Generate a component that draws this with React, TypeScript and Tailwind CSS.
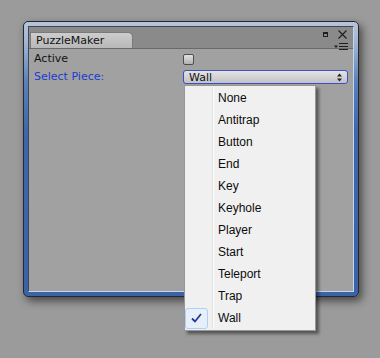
const PIECES = ['None', 'Antitrap', 'Button', 'End', 'Key', 'Keyhole', 'Player', 'Start', 'Teleport', 'Trap', 'Wall']

const editorFont = { fontFamily: '"DejaVu Sans", Verdana, sans-serif' }
const menuFont = { fontFamily: '"Liberation Sans", Arial, sans-serif' }

function TitleIcons() {
  return (
    <div className="flex flex-col items-end pr-[6px] pt-[3px] gap-[4px]">
      <div className="flex items-center gap-[10px]">
        <span className="block w-[5px] h-[5px] border border-[#1e1e1e] border-t-[2px]" />
        <svg width="9" height="9" viewBox="0 0 9 9">
          <path d="M0.5 0.5 L8.5 8.5 M8.5 0.5 L0.5 8.5" stroke="#1e1e1e" strokeWidth="1.1" />
        </svg>
      </div>
      <svg width="14" height="7" viewBox="0 0 14 7" className="mr-[-1px]">
        <path d="M0 2.5 L4 2.5 L2 5 Z" fill="#1e1e1e" />
        <path d="M5 0.5 H14 M5 3.5 H14 M5 6.5 H14" stroke="#1e1e1e" strokeWidth="1" />
      </svg>
    </div>
  )
}

function PieceMenu({ selected }: { selected: string }) {
  return (
    <div
      className="absolute left-[184px] top-[85px] w-[132px] bg-[#f0f0f0] border border-[#979797] py-[1px] shadow-[3px_3px_3px_rgba(0,0,0,0.45)]"
      style={menuFont}
    >
      <div className="absolute left-[27px] top-[1px] bottom-[1px] w-[2px] border-l border-[#e2e3e3] bg-white/80" />
      {PIECES.map(p => (
        <div key={p} className="relative h-[22px] flex items-center">
          <div className="w-[33px] h-full flex items-center">
            {p === selected && (
              <div className="w-[23px] h-[21px] rounded-[3px] border border-[#aecff7] bg-[#e8eff8] flex items-center justify-center">
                <svg width="11" height="10" viewBox="0 0 11 10">
                  <path d="M1 5.5 L4 8.5 L10 1" stroke="#1e3c9a" strokeWidth="1.8" fill="none" />
                </svg>
              </div>
            )}
          </div>
          <span className="text-[12px] text-[#0c0c0c] leading-none">{p}</span>
        </div>
      ))}
    </div>
  )
}

export default function App() {
  const selected = 'Wall'

  return (
    <div className="relative w-[380px] h-[358px] bg-[#9b9b9b] pt-[21px] pl-[23px] overflow-hidden">
      {/* Editor window frame */}
      <div className="w-[336px] h-[276px] rounded-[5px] border border-[#23272e] bg-[linear-gradient(to_bottom,#b7c4d8_0%,#9fb4d2_8%,#5a80bb_22%,#3d67aa_40%,#3a63a7_100%)] p-[4px] shadow-[3px_4px_8px_rgba(0,0,0,0.55)]">
        <div className="h-full flex flex-col border border-[#3c4656] border-b-[#c4d6ee] border-r-[#c4d6ee] bg-[#a1a1a1]">
          {/* Tab strip */}
          <div className="h-[22px] bg-[#8a8a8a] flex items-end justify-between border-b border-[#6a6a6a]">
            <div
              className="ml-[1px] w-[103px] h-[16px] rounded-tr-[5px] rounded-tl-[1px] bg-gradient-to-b from-[#cdcdcd] to-[#b8b8b8] border border-b-0 border-[#7a7a7a] text-[11px] text-[#111] pl-[5px] leading-[15px]"
              style={editorFont}
            >
              PuzzleMaker
            </div>
            <div className="self-start">
              <TitleIcons />
            </div>
          </div>

          {/* Inspector fields */}
          <div className="flex flex-col pt-[2px] px-[5px] gap-[2px] text-[11px]" style={editorFont}>
            <div className="h-[16px] flex items-center">
              <span className="w-[149px] text-[#111]">Active</span>
              <span className="block w-[11px] h-[11px] rounded-[2px] border border-[#4e4e4e] bg-gradient-to-b from-[#e2e2e2] to-[#b0b0b0]" />
            </div>
            <div className="h-[16px] flex items-center">
              <span className="w-[149px] text-[#1c3ad0]">Select Piece:</span>
              <div className="flex-1 h-[14px] rounded-[3px] border border-[#3b4fc7] bg-gradient-to-b from-[#e4e4e4] to-[#c2c2c2] flex items-center justify-between px-[5px]">
                <span className="text-[11px] text-[#111] leading-none">Wall</span>
                <svg width="5" height="9" viewBox="0 0 5 9">
                  <path d="M2.5 0.5 L5 3.5 H0 Z M2.5 8.5 L5 5.5 H0 Z" fill="#222" />
                </svg>
              </div>
            </div>
          </div>
        </div>
      </div>

      <PieceMenu selected={selected} />
    </div>
  )
}
